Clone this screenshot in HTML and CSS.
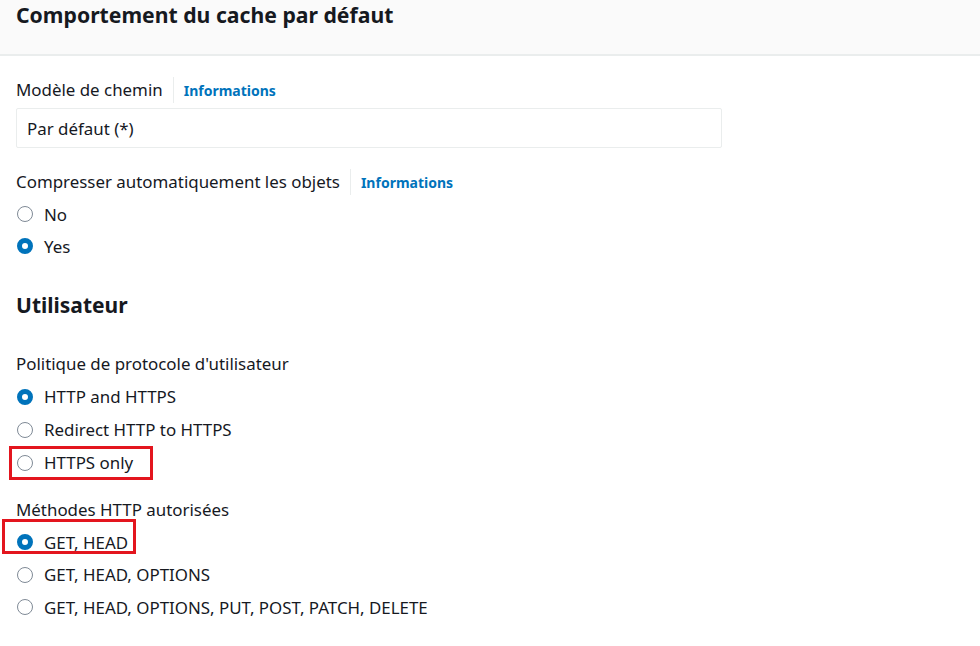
FILE: index.html
```html
<!DOCTYPE html>
<html lang="fr">
<head>
<meta charset="utf-8">
<link rel="stylesheet" href="styles.css">
</head>
<body>
<div class="page">
  <header class="head">
    <h2 class="title">Comportement du cache par défaut</h2>
  </header>
  <div class="body">
    <div class="field">
      <div class="label-row"><span class="label">Modèle de chemin</span><span class="sep"></span><a class="info">Informations</a></div>
      <div class="input">Par défaut (*)</div>
    </div>
    <div class="field f2">
      <div class="label-row"><span class="label">Compresser automatiquement les objets</span><span class="sep"></span><a class="info">Informations</a></div>
      <div class="radios">
        <div class="radio"><span class="dot"></span><span>No</span></div>
        <div class="radio"><span class="dot on"></span><span>Yes</span></div>
      </div>
    </div>
    <h2 class="sub">Utilisateur</h2>
    <div class="field f3">
      <div class="label-plain">Politique de protocole d'utilisateur</div>
      <div class="radios tall">
        <div class="radio"><span class="dot on"></span><span>HTTP and HTTPS</span></div>
        <div class="radio"><span class="dot"></span><span>Redirect HTTP to HTTPS</span></div>
        <div class="radio marked m1"><span class="dot"></span><span>HTTPS only</span></div>
      </div>
    </div>
    <div class="field f4">
      <div class="label-plain">Méthodes HTTP autorisées</div>
      <div class="radios mid">
        <div class="radio marked m2"><span class="dot on"></span><span>GET, HEAD</span></div>
        <div class="radio"><span class="dot"></span><span>GET, HEAD, OPTIONS</span></div>
        <div class="radio"><span class="dot"></span><span>GET, HEAD, OPTIONS, PUT, POST, PATCH, DELETE</span></div>
      </div>
    </div>
  </div>
</div>
</body>
</html>
```

FILE: styles.css
```css
*, *::before, *::after { box-sizing: border-box; }
html, body { margin: 0; padding: 0; background: #fff; }
body { font-family: "Noto Sans", "Liberation Sans", sans-serif; color: #16191f; font-size: 16.9px; }
.page { width: 980px; height: 646px; overflow: hidden; position: relative; }
.head { background: #fafafa; border-bottom: 2px solid #eaeded; height: 56px; padding: 0 16px; }
.title { margin: 0; font-size: 21.2px; font-weight: 700; line-height: 29px; }
.body { padding: 0 16px; }
.field { margin-top: 20px; }
.label-row { display: flex; align-items: center; height: 28px; }
.label { line-height: 28px; }
.sep { width: 1px; height: 26px; background: #eaeded; margin: 0 10px; }
.info { color: #0073bb; font-weight: 700; font-size: 14px; }
.input { margin-top: 4px; width: 706px; height: 40px; border: 1px solid #eaeded; border-radius: 2px; padding: 0 10px; display: flex; align-items: center; }
.f2 { margin-top: 20px; }
.radios { display: flex; flex-direction: column; margin-top: 2px; }
.radio { display: flex; align-items: center; height: 32px; gap: 11px; position: relative; }
.tall .radio { height: 33px; }
.mid .radio { height: 32.5px; }
.dot { flex: none; width: 16px; height: 16px; border-radius: 50%; border: 1.6px solid #7f8a96; margin-left: 1px; }
.dot.on { border: 5px solid #0073bb; }
.sub { margin: 28px 0 0; font-size: 21px; font-weight: 700; line-height: 30px; }
.f3 { margin-top: 30px; }
.label-plain { line-height: 28px; }
.f4 { margin-top: 17px; }
.marked::after { content: ""; position: absolute; border: 3px solid #e3151e; }
.m1::after { left: -7px; top: 0; width: 144px; height: 34px; }
.m2::after { left: -14px; top: -7px; width: 134px; height: 35px; }
```
